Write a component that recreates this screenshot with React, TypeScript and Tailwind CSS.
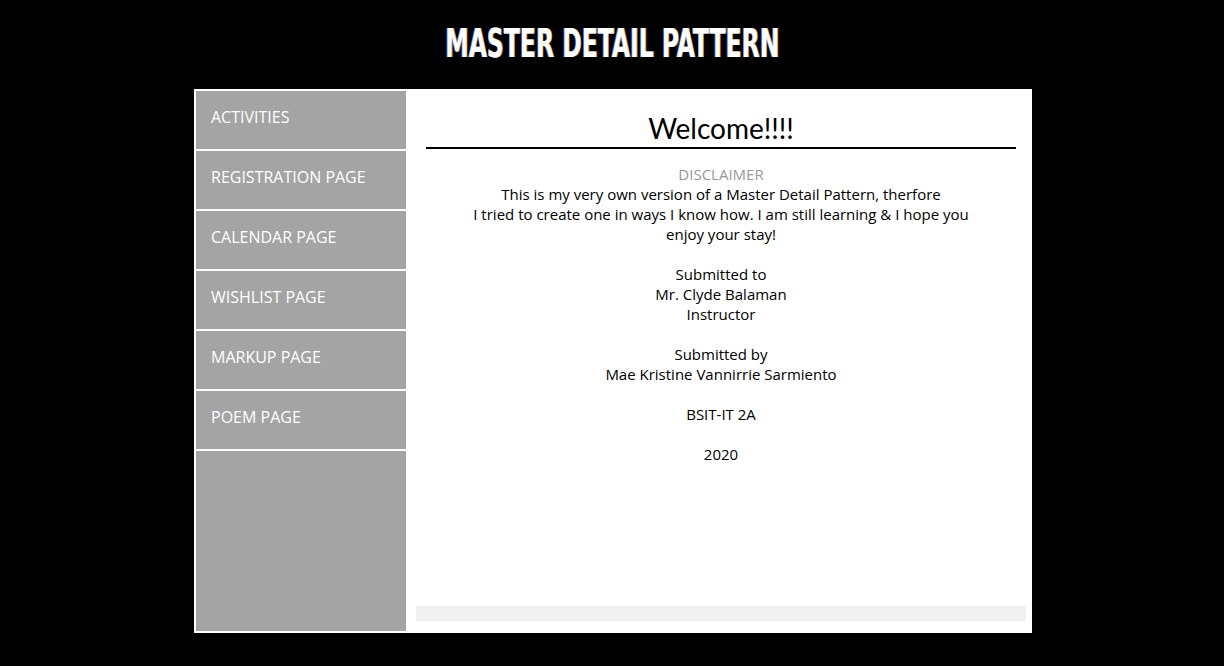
import React from "react";

const items = [
  "ACTIVITIES",
  "REGISTRATION PAGE",
  "CALENDAR PAGE",
  "WISHLIST PAGE",
  "MARKUP PAGE",
  "POEM PAGE",
];

export default function App() {
  return (
    <div className="w-full h-[666px] bg-black overflow-hidden">
      <h1 className="pt-[22px] h-[89px] text-center">
        <span
          className="inline-block text-white font-bold text-[39px] leading-[44px] scale-x-[0.67] [text-shadow:-1px_0_rgba(80,140,255,0.8),1px_0_rgba(255,170,60,0.8)]"
          style={{ fontFamily: '"Liberation Sans Narrow", "DejaVu Sans Condensed", "Liberation Sans", sans-serif' }}
        >
          MASTER DETAIL PATTERN
        </span>
      </h1>
      <div className="ml-[194px] w-[838px] h-[544px] bg-white p-[2px] flex">
        <nav className="w-[210px] flex flex-col gap-[2px] bg-white">
          {items.map((t) => (
            <div
              key={t}
              className="h-[58px] bg-[#a4a4a4] text-white text-[16px] pl-[15px] pb-[7px] flex items-center"
              style={{ fontFamily: '"Open Sans", sans-serif' }}
            >
              {t}
            </div>
          ))}
          <div className="flex-1 bg-[#a4a4a4]" />
        </nav>
        <main className="flex-1 pl-[10px] pr-[4px] pt-[20px] pb-[10px] flex flex-col">
          <h2
            className="mb-[2px] text-center text-black text-[28px] leading-[34px] font-normal"
            style={{ fontFamily: 'Lato, "Open Sans", sans-serif' }}
          >
            Welcome!!!!
          </h2>
          <div className="mx-[10px] h-[2px] bg-black" />
          <div
            className="mt-[15px] text-center text-black text-[15px] leading-[20px]"
            style={{ fontFamily: '"Open Sans", sans-serif' }}
          >
            <p className="text-[#999999]">DISCLAIMER</p>
            <p>
              This is my very own version of a Master Detail Pattern, therfore
              <br />
              I tried to create one in ways I know how. I am still learning &amp; I hope you
              <br />
              enjoy your stay!
            </p>
            <p className="mt-[20px]">
              Submitted to
              <br />
              Mr. Clyde Balaman
              <br />
              Instructor
            </p>
            <p className="mt-[20px]">
              Submitted by
              <br />
              Mae Kristine Vannirrie Sarmiento
            </p>
            <p className="mt-[20px]">BSIT-IT 2A</p>
            <p className="mt-[20px]">2020</p>
          </div>
          <div className="mt-auto h-[15px] bg-[#f0f0f0]" />
        </main>
      </div>
    </div>
  );
}
